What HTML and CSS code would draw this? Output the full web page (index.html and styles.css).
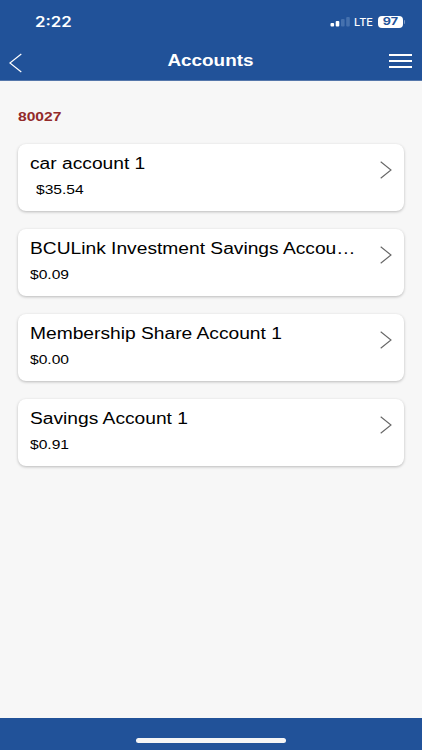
FILE: index.html
```html
<!DOCTYPE html>
<html lang="en">
<head>
    <meta charset="UTF-8">
    <meta name="viewport" content="width=device-width, initial-scale=1.0">
    <title>Accounts</title>
    <link rel="stylesheet" href="styles.css">
</head>
<body>
    <header>
        <!-- Status bar -->
        <div class="status-bar">
            <span class="time">2:22</span>
            <div class="status-icons">
                <svg class="signal" width="20" height="12" viewBox="0 0 20 12">
                    <rect x="0.5" y="7" width="3.6" height="3.5" rx="1" fill="#fff"/>
                    <rect x="5.7" y="5" width="3.6" height="5.5" rx="1" fill="#fff"/>
                    <rect x="11" y="3" width="3.6" height="7.5" rx="1" fill="#4571ae"/>
                    <rect x="16.2" y="1" width="3.6" height="9.5" rx="1" fill="#4571ae"/>
                </svg>
                <span class="network">LTE</span>
                <div class="battery"><span>97</span></div>
                <div class="battery-tip"></div>
            </div>
        </div>
        <!-- Title bar -->
        <div class="nav-bar">
            <svg class="back" width="14" height="20" viewBox="0 0 14 20">
                <path d="M12.3 1 L0.9 10 L12.3 19" fill="none" stroke="#fff" stroke-width="1.2"/>
            </svg>
            <h1>Accounts</h1>
            <div class="menu">
                <i></i>
                <i></i>
                <i></i>
            </div>
        </div>
    </header>

    <main>
        <h2>80027</h2>
        <div class="card">
            <div class="details">
                <p class="name">car account 1</p>
                <p class="balance indent">$35.54</p>
            </div>
            <svg class="arrow" width="12" height="18" viewBox="0 0 12 18">
                <path d="M0.7 0.7 L11 9 L0.7 17.3" fill="none" stroke="#666" stroke-width="1.1"/>
            </svg>
        </div>
        <div class="card">
            <div class="details">
                <p class="name">BCULink Investment Savings Accou…</p>
                <p class="balance">$0.09</p>
            </div>
            <svg class="arrow" width="12" height="18" viewBox="0 0 12 18">
                <path d="M0.7 0.7 L11 9 L0.7 17.3" fill="none" stroke="#666" stroke-width="1.1"/>
            </svg>
        </div>
        <div class="card">
            <div class="details">
                <p class="name">Membership Share Account 1</p>
                <p class="balance">$0.00</p>
            </div>
            <svg class="arrow" width="12" height="18" viewBox="0 0 12 18">
                <path d="M0.7 0.7 L11 9 L0.7 17.3" fill="none" stroke="#666" stroke-width="1.1"/>
            </svg>
        </div>
        <div class="card">
            <div class="details">
                <p class="name">Savings Account 1</p>
                <p class="balance">$0.91</p>
            </div>
            <svg class="arrow" width="12" height="18" viewBox="0 0 12 18">
                <path d="M0.7 0.7 L11 9 L0.7 17.3" fill="none" stroke="#666" stroke-width="1.1"/>
            </svg>
        </div>
    </main>

    <footer>
        <div class="home-bar"></div>
    </footer>
</body>
</html>
```

FILE: styles.css
```css
* {
    box-sizing: border-box;
}
body {
    margin: 0;
    height: 750px;
    display: flex;
    flex-direction: column;
    overflow: hidden;
    background-color: #f7f7f7;
    font-family: "Liberation Sans", Arial, sans-serif;
    color: #000;
}
h1, h2, p {
    margin: 0;
}

/* Header */
header {
    height: 81px;
    background-color: #215299;
    border-bottom: 1px solid #5577ab;
    color: #fff;
}
.status-bar {
    height: 42px;
    padding: 1px 17px 0 35px;
    display: flex;
    justify-content: space-between;
    align-items: center;
}
/* wide lettering, used for all text */
.time, .network, .battery span, h1, h2, .name, .balance {
    transform: scaleX(1.2);
    transform-origin: left center;
}
.time {
    font-family: Inter, sans-serif;
    font-size: 14px;
    font-weight: 600;
}
.status-icons {
    display: flex;
    align-items: center;
}
.network {
    width: 24px;
    margin-left: 4px;
    font-family: Inter, sans-serif;
    font-size: 11px;
    font-weight: 500;
    transform: none;
}
.battery {
    width: 25px;
    height: 12px;
    border-radius: 4px;
    background-color: #fff;
    color: #215299;
    font-family: Inter, sans-serif;
    font-size: 10.5px;
    font-weight: 700;
    line-height: 12px;
    text-align: center;
}
.battery span {
    display: inline-block;
    transform-origin: center;
}
.battery-tip {
    width: 1px;
    height: 4px;
    margin-left: 1px;
    border-radius: 0 2px 2px 0;
    background-color: #7997c4;
}
.nav-bar {
    height: 38px;
    padding: 0 10px 0 9px;
    display: flex;
    justify-content: space-between;
    align-items: center;
}
.back {
    margin-top: 3px;
    margin-right: 9px;
}
h1 {
    font-size: 16px;
    line-height: 18px;
    transform: scaleX(1.18);
    transform-origin: center;
}
.menu {
    width: 23px;
    height: 14px;
    display: flex;
    flex-direction: column;
    justify-content: space-between;
}
.menu i {
    height: 2px;
    background-color: #fff;
}

/* Account list */
main {
    flex: 1;
    padding: 28px 18px 0;
}
h2 {
    width: fit-content;
    margin-bottom: 19px;
    font-size: 13px;
    line-height: 16px;
    color: #932a2a;
}
.card {
    height: 67px;
    margin-bottom: 18px;
    padding: 10px 12px 0 11.5px;
    display: flex;
    justify-content: space-between;
    background-color: #fff;
    border-radius: 8px;
    box-shadow: 0 1px 3px rgba(0, 0, 0, 0.25);
}
.name {
    width: fit-content;
    font-size: 16px;
    line-height: 20px;
    white-space: nowrap;
}
.balance {
    width: fit-content;
    margin-top: 8px;
    font-size: 13px;
    line-height: 16px;
}
.indent {
    margin-left: 6px;
}
.arrow {
    margin-top: 6.5px;
}

/* Bottom bar */
footer {
    height: 32px;
    padding-top: 20px;
    background-color: #215299;
}
.home-bar {
    width: 150px;
    height: 5px;
    margin: 0 auto;
    border-radius: 3px;
    background-color: #f5f5f5;
}
```
